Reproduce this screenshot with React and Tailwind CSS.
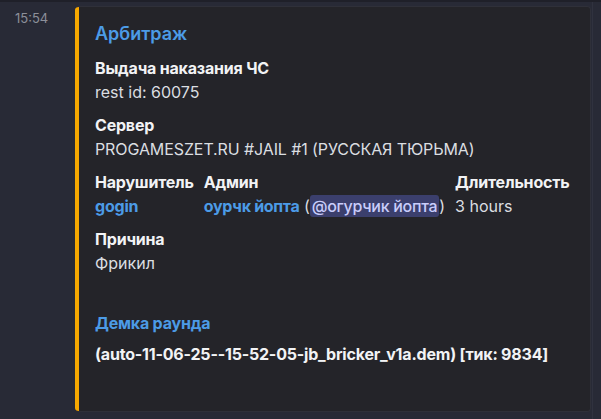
export default function App() {
  const font = { fontFamily: "Inter, 'Noto Sans', sans-serif" };
  return (
    <div className="w-[601px] h-[419px] bg-[#282a36] relative overflow-hidden" style={font}>
      <div className="h-[2px] bg-[#1f2029]" />
      <div className="flex">
        <div className="w-[75px] pl-[15px] pt-[7px] text-[13px] leading-[18px] text-[#8c8f99]">15:54</div>
        <div className="mt-[4px] w-[516px] h-[406px] flex rounded-[4px] overflow-hidden border border-[#2f3039] border-l-0 bg-[#242429]">
          <div className="w-[4px] bg-[#f7a800] shrink-0" />
          <div className="pl-[16px] pt-[14px] flex flex-col">
            <div className="text-[18px] leading-[26px] font-semibold text-[#4c9be6]">Арбитраж</div>
            <div className="mt-[9px] flex flex-col gap-[9px] text-[16px] leading-[24px]">
              <div>
                <div className="font-bold tracking-[-0.2px] text-[#f2f3f5]">Выдача наказания ЧС</div>
                <div className="text-[#dbdee1]">rest id: 60075</div>
              </div>
              <div>
                <div className="font-bold tracking-[-0.2px] text-[#f2f3f5]">Сервер</div>
                <div className="text-[#dbdee1] tracking-[-0.1px]">PROGAMESZET.RU #JAIL #1 (РУССКАЯ ТЮРЬМА)</div>
              </div>
              <div className="flex gap-[10px]">
                <div>
                  <div className="font-bold tracking-[-0.2px] text-[#f2f3f5]">Нарушитель</div>
                  <div className="font-bold tracking-[-0.2px] text-[#4c9be6]">gogin</div>
                </div>
                <div>
                  <div className="font-bold tracking-[-0.2px] text-[#f2f3f5]">Админ</div>
                  <div className="text-[#dbdee1] whitespace-nowrap">
                    <span className="font-bold tracking-[-0.3px] text-[#4c9be6]">оурчк йопта</span>{" "}(
                    <span className="rounded-[3px] bg-[#3b3f6d] text-[#c9cdfb] px-[2px] py-[1px] font-medium tracking-[-0.3px]">@огурчик йопта</span>)
                  </div>
                </div>
                <div>
                  <div className="font-bold tracking-[-0.2px] text-[#f2f3f5]">Длительность</div>
                  <div className="text-[#dbdee1]">3 hours</div>
                </div>
              </div>
              <div>
                <div className="font-bold tracking-[-0.2px] text-[#f2f3f5]">Причина</div>
                <div className="text-[#dbdee1]">Фрикил</div>
              </div>
              <div className="mt-[27px]">
                <div className="font-bold tracking-[-0.2px] text-[#4c9be6]">Демка раунда</div>
                <div className="mt-[7px] font-bold tracking-[-0.2px] text-[#f2f3f5]">(auto-11-06-25--15-52-05-jb_bricker_v1a.dem) [тик: 9834]</div>
              </div>
            </div>
          </div>
        </div>
        <div className="ml-[1px] w-[1px] h-[417px] bg-[#30323f]" />
      </div>
    </div>
  );
}
